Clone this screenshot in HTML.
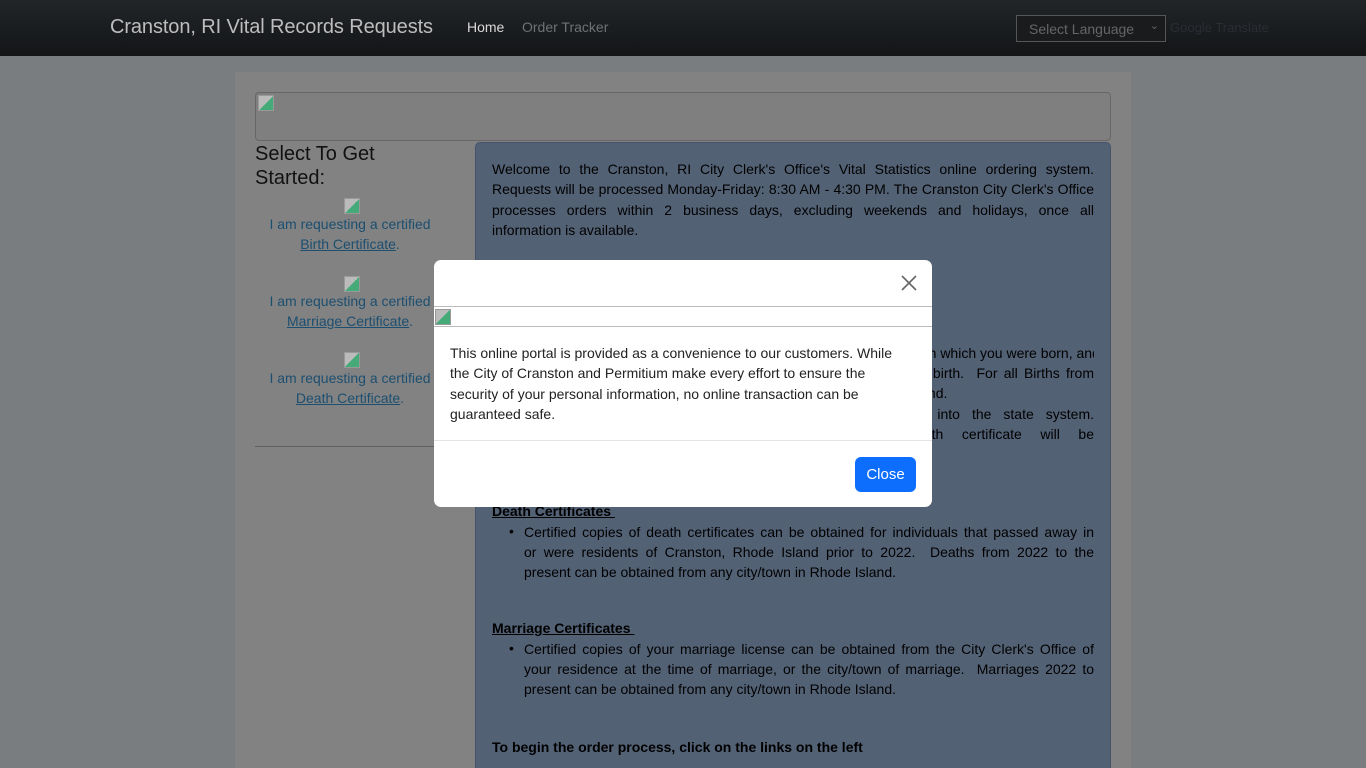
<!DOCTYPE html>
<html style="overflow:hidden;height:768px"><head><meta charset="utf-8"><style>
*{margin:0;padding:0;box-sizing:border-box}
body{width:1366px;height:768px;overflow:hidden;background:#7a7d80;font-family:"Liberation Sans",sans-serif;font-size:14px;position:relative}
.a{position:absolute;white-space:nowrap}
.nav{position:absolute;left:0;top:0;width:1366px;height:56px;background:linear-gradient(#222528,#131517)}
.cont{position:absolute;left:235px;top:72px;width:896px;height:696px;background:#828282}
.hdr{position:absolute;left:255px;top:92px;width:856px;height:49px;border:1px solid #666;border-radius:4px;background:#7f7f7f}
.panel{position:absolute;left:475px;top:142px;width:636px;height:626px;background:#536175;border:1px solid #46526a;border-bottom:none;border-radius:5px 5px 0 0}
.ln{position:absolute;left:492px;width:602px;line-height:20px;color:#000;text-align:justify;text-align-last:justify;white-space:nowrap;overflow:hidden}
.bl{left:524px;width:570px}
.nl{text-align-last:left}
.lk{position:absolute;left:255px;width:190px;text-align:center;color:#1c4f70;line-height:20px}
.lk u{color:#1c4f70}
.bi{position:absolute;width:16px;height:16px;border:1px solid #999;background:linear-gradient(135deg,#bbb 50%,#4a7 50%)}
.modal{position:absolute;left:434px;top:260px;width:498px;height:247px;background:#fff;border-radius:7px;overflow:hidden}
</style></head><body>
<div class="nav"></div>
<div class="a" style="left:110px;top:16px;font-size:20px;letter-spacing:-0.1px;color:#bdbdbd">Cranston, RI Vital Records Requests</div>
<div class="a" style="left:467px;top:19px;font-size:14px;color:#d9d9d9">Home</div>
<div class="a" style="left:522px;top:19px;font-size:14px;color:#6f7274">Order Tracker</div>
<div class="a" style="left:1016px;top:15px;width:150px;height:27px;border:1px solid #555;background:#191b1d;color:#666;font-size:14px;padding:5px 0 0 12px">Select Language<span style="position:absolute;right:6px;top:3px;font-size:11px;color:#666">&#8964;</span></div>
<div class="a" style="left:1170px;top:20px;font-size:13px;color:#2a2e33">Google Translate</div>
<div class="cont"></div>
<div class="hdr"><div class="bi" style="left:2px;top:2px"></div></div>
<div class="a" style="left:255px;top:142px;font-size:20px;line-height:24px;color:#111">Select To Get<br>Started:</div>
<div class="bi" style="left:344px;top:198px"></div>
<div class="lk" style="top:214px">I am requesting a certified<br><u>Birth Certificate</u>.</div>
<div class="bi" style="left:344px;top:276px"></div>
<div class="lk" style="top:291px">I am requesting a certified<br><u>Marriage Certificate</u>.</div>
<div class="bi" style="left:344px;top:352px"></div>
<div class="lk" style="top:368px">I am requesting a certified<br><u>Death Certificate</u>.</div>
<div class="a" style="left:255px;top:446px;width:220px;height:1px;background:#5e5e5e"></div>
<div class="panel"></div>
<div class="ln" style="top:159px">Welcome to the Cranston, RI City Clerk's Office's Vital Statistics online ordering system.</div>
<div class="ln" style="top:179px">Requests will be processed Monday-Friday: 8:30 AM - 4:30 PM. The Cranston City Clerk's Office</div>
<div class="ln" style="top:200px">processes orders within 2 business days, excluding weekends and holidays, once all</div>
<div class="ln nl" style="top:220px">information is available.</div>
<div class="ln bl" style="top:343px">Certified copies of birth certificates can be obtained from the city in which you were born, and in</div>
<div class="ln bl" style="top:363px">the city or town of your parents' residence at the time of your birth.&nbsp; For all Births from</div>
<div class="ln bl nl" style="top:383px">1990 to present can be obtained from any city/town of Rhode Island.</div>
<div class="ln bl" style="top:404px">Please allow time for the birth record to be registered into the state system.</div>
<div class="ln bl" style="top:424px">Once the birth is registered, a copy of the birth certificate will be</div>
<div class="ln nl" style="top:501px;font-weight:bold;text-decoration:underline">Death Certificates&nbsp;</div>
<div class="a" style="left:509px;top:521px;line-height:20px">•</div>
<div class="ln bl" style="top:522px">Certified copies of death certificates can be obtained for individuals that passed away in</div>
<div class="ln bl" style="top:542px">or were residents of Cranston, Rhode Island prior to 2022.&nbsp; Deaths from 2022 to the</div>
<div class="ln bl nl" style="top:562px">present can be obtained from any city/town in Rhode Island.</div>
<div class="ln nl" style="top:618px;font-weight:bold;text-decoration:underline">Marriage Certificates&nbsp;</div>
<div class="a" style="left:509px;top:638px;line-height:20px">•</div>
<div class="ln bl" style="top:639px">Certified copies of your marriage license can be obtained from the City Clerk's Office of</div>
<div class="ln bl" style="top:659px">your residence at the time of marriage, or the city/town of marriage.&nbsp; Marriages 2022 to</div>
<div class="ln bl nl" style="top:679px">present can be obtained from any city/town in Rhode Island.</div>
<div class="ln nl" style="top:737px;font-weight:bold">To begin the order process, click on the links on the left</div>
<div class="modal">
 <svg class="a" style="left:467px;top:15px" width="16" height="16" viewBox="0 0 16 16"><path d="M1 1L15 15M15 1L1 15" stroke="#666" stroke-width="1.6"/></svg>
 <div class="a" style="left:0;top:46px;width:498px;height:21px;border-top:1px solid #bbb;border-bottom:1px solid #bbb"><div class="bi" style="left:1px;top:2px"></div></div>
 <div class="a" style="left:16px;top:83px;line-height:20.3px;color:#222">This online portal is provided as a convenience to our customers. While<br>the City of Cranston and Permitium make every effort to ensure the<br>security of your personal information, no online transaction can be<br>guaranteed safe.</div>
 <div class="a" style="left:0;top:180px;width:498px;height:1px;background:#e3e3e3"></div>
 <div class="a" style="left:421px;top:197px;width:61px;height:35px;background:#0d6efd;border-radius:6px;color:#fff;font-size:15px;text-align:center;line-height:35px">Close</div>
</div>
</body></html>
